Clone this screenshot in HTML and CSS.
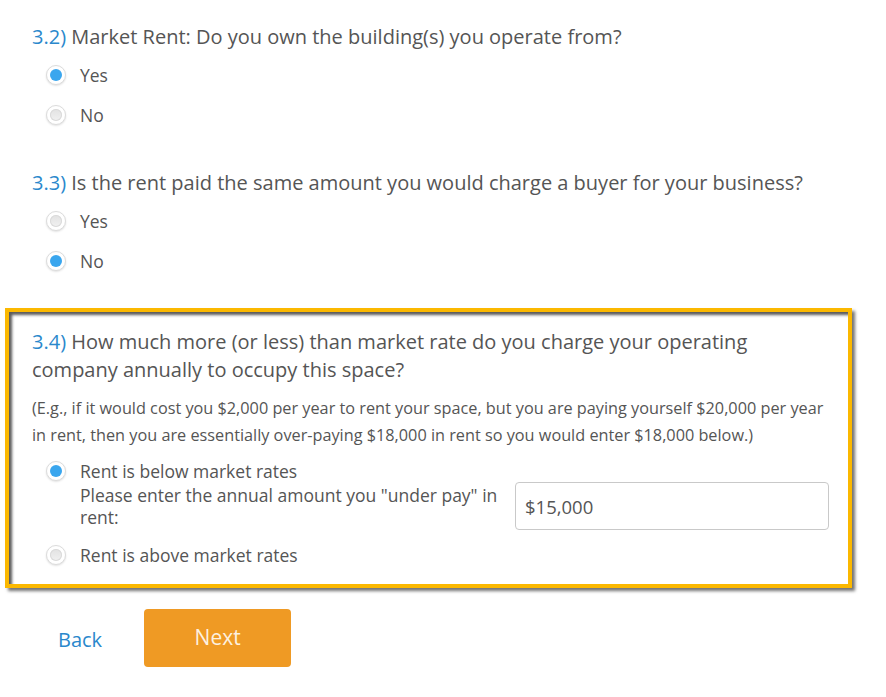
FILE: index.html
```html
<!DOCTYPE html>
<html lang="en">
<head>
<meta charset="utf-8">
<title>Market Rent</title>
<link rel="stylesheet" href="styles.css">
</head>
<body>
<form class="survey">
  <section class="question q-first">
    <h2 class="q-title"><span class="q-num">3.2)</span> Market Rent: Do you own the building(s) you operate from?</h2>
    <div class="options">
      <label class="option"><span class="radio checked"></span><span class="opt-text">Yes</span></label>
      <label class="option"><span class="radio"></span><span class="opt-text">No</span></label>
    </div>
  </section>

  <section class="question q-second">
    <h2 class="q-title"><span class="q-num">3.3)</span> Is the rent paid the same amount you would charge a buyer for your business?</h2>
    <div class="options">
      <label class="option"><span class="radio"></span><span class="opt-text">Yes</span></label>
      <label class="option"><span class="radio checked"></span><span class="opt-text">No</span></label>
    </div>
  </section>

  <section class="question highlight">
    <h2 class="q-title"><span class="q-num">3.4)</span> How much more (or less) than market rate do you charge your operating company annually to occupy this space?</h2>
    <p class="q-help">(E.g., if it would cost you $2,000 per year to rent your space, but you are paying yourself $20,000 per year in rent, then you are essentially over-paying $18,000 in rent so you would enter $18,000 below.)</p>
    <div class="options tight">
      <div class="option sub">
        <span class="radio checked"></span>
        <div class="opt-body">
          <span class="opt-text">Rent is below market rates</span>
          <div class="amount-row">
            <span class="amount-label">Please enter the annual amount you "under pay" in rent:</span>
            <input class="amount-input" type="text" value="$15,000">
          </div>
        </div>
      </div>
      <label class="option last"><span class="radio"></span><span class="opt-text">Rent is above market rates</span></label>
    </div>
  </section>

  <div class="actions">
    <a class="btn-back" href="#">Back</a>
    <button class="btn-next" type="button">Next</button>
  </div>
</form>
</body>
</html>
```

FILE: styles.css
```css
* {
  box-sizing: border-box;
}

body {
  margin: 0;
  background: #ffffff;
  font-family: "Open Sans", "Noto Sans", sans-serif;
  color: #555555;
}

.survey {
  width: 886px;
}

.question {
  padding: 0 0 0 32px;
}

.q-first {
  padding-top: 23px;
}

.q-second {
  padding-top: 34px;
}

.q-title {
  margin: 0;
  font-size: 20px;
  font-weight: 400;
  line-height: 28px;
  color: #555555;
}

.q-num {
  color: #2a88cc;
}

.options {
  margin-top: 4px;
}

.option {
  display: flex;
  align-items: center;
  height: 40px;
  padding-left: 14px;
  font-size: 17.5px;
  line-height: 24px;
}

.opt-text {
  margin-left: 14px;
}

/* radio bullets */
.radio {
  position: relative;
  flex: none;
  width: 20px;
  height: 20px;
  border-radius: 50%;
  background: #ffffff;
  border: 1px solid #dcdcdc;
  box-shadow: 0 1px 2px rgba(0, 0, 0, 0.12);
}

.radio::after {
  content: "";
  position: absolute;
  left: 3px;
  top: 3px;
  width: 12px;
  height: 12px;
  border-radius: 50%;
  background: linear-gradient(#e2e2e2, #f1f1f1);
  box-shadow: inset 0 0 0 1px #dadada;
}

.radio.checked::after {
  background: #3aa6ee;
  box-shadow: none;
}

/* highlighted question */
.highlight {
  margin: 27px 0 0 5px;
  width: 847px;
  padding: 16px 19px 9px 23px;
  border: 4px solid #fbb800;
  box-shadow: 3px 3px 3px rgba(0, 0, 0, 0.55), inset 3px 3px 3px rgba(0, 0, 0, 0.65);
}

.q-help {
  margin: 11px 0 0;
  font-size: 16.25px;
  line-height: 27px;
  color: #555555;
}

.options.tight {
  margin-top: 11px;
}

.option.sub {
  height: auto;
  align-items: flex-start;
}

.option.sub .radio {
  margin-top: 1px;
}

.opt-body {
  flex: 1;
  margin-left: 14px;
  line-height: 22px;
}

.opt-body .opt-text {
  margin-left: 0;
  display: block;
}

.amount-row {
  display: flex;
  align-items: center;
  height: 48px;
}

.amount-label {
  width: 435px;
  padding-right: 10px;
  line-height: 22px;
}

.amount-input {
  flex: 1;
  height: 48px;
  border: 1px solid #c9c9c9;
  border-radius: 4px;
  padding: 0 9px;
  font-family: "Open Sans", "Noto Sans", sans-serif;
  font-size: 18.5px;
  color: #555555;
  background: #ffffff;
  outline: none;
}

.option.last {
  margin-top: 5px;
}

/* navigation */
.actions {
  display: flex;
  align-items: center;
  margin-top: 21px;
  padding-left: 32px;
}

.btn-back {
  padding: 0 26px;
  font-size: 20px;
  line-height: 28px;
  color: #2a88cc;
  text-decoration: none;
  margin-top: 3px;
}

.btn-next {
  margin-left: 16px;
  width: 147px;
  height: 58px;
  border: none;
  border-radius: 4px;
  background: #ef9a24;
  color: #fdf1e0;
  font-family: "Open Sans", "Noto Sans", sans-serif;
  font-size: 21px;
  padding: 0 0 2px;
}
```
